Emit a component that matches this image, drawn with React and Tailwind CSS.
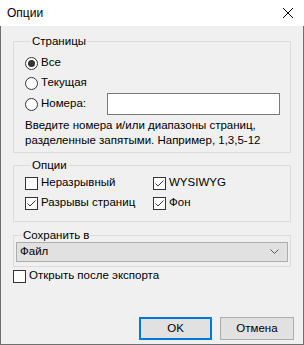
import { useState } from 'react'

function Radio({ checked, label, onClick }) {
  return (
    <label className="flex items-center gap-[3px] h-[20px] cursor-default" onClick={onClick}>
      <span className="w-[13px] h-[13px] rounded-full border border-[#333333] bg-white flex items-center justify-center">
        {checked && <span className="w-[7px] h-[7px] rounded-full bg-[#333333]" />}
      </span>
      <span>{label}</span>
    </label>
  )
}

function Check({ checked, label, onClick }) {
  return (
    <label className="flex items-center gap-[3px] h-[20px] cursor-default" onClick={onClick}>
      <span className="w-[13px] h-[13px] border border-[#333333] bg-white flex items-center justify-center">
        {checked && (
          <svg width="11" height="11" viewBox="0 0 11 11">
            <path d="M1.5 5.5 L4 8 L9.5 2.5" fill="none" stroke="#333333" strokeWidth="1" />
          </svg>
        )}
      </span>
      <span>{label}</span>
    </label>
  )
}

export default function App() {
  const [pages, setPages] = useState('all')
  const [opts, setOpts] = useState({ seamless: false, wysiwyg: true, breaks: true, bg: true })
  const [openAfter, setOpenAfter] = useState(false)
  const toggle = (k) => setOpts({ ...opts, [k]: !opts[k] })

  return (
    <div
      className="w-[304px] h-[345px] flex flex-col text-[11.5px] text-black bg-[#f0f0f0] border-x border-b border-[#6f6f6f]"
      style={{ fontFamily: '"Liberation Sans", Arial, sans-serif' }}
    >
      {/* заголовок */}
      <div className="h-[26px] bg-white flex items-center justify-between pl-[7px] pr-[10px] -mx-px">
        <span className="text-[12px]">Опции</span>
        <svg width="12" height="12" viewBox="0 0 12 12">
          <path d="M1 1 L11 11 M11 1 L1 11" stroke="#000" strokeWidth="1" />
        </svg>
      </div>

      <div className="flex flex-col px-[12px] pt-[8px]">
        <fieldset className="border border-[#dcdcdc] h-[119px] pl-[11px] pr-[10px]">
          <legend className="ml-[6px] px-[1px] leading-[14px]">Страницы</legend>
          <div className="mt-[5px]">
            <Radio checked={pages === 'all'} label="Все" onClick={() => setPages('all')} />
            <Radio checked={pages === 'cur'} label="Текущая" onClick={() => setPages('cur')} />
            <div className="flex items-center justify-between">
              <Radio checked={pages === 'num'} label="Номера:" onClick={() => setPages('num')} />
              <input className="w-[173px] h-[22px] border border-[#7a7a7a] bg-white outline-none px-1" />
            </div>
            <p className="mt-[3px] leading-[15px]">
              Введите номера и/или диапазоны страниц,
              <br />
              разделенные запятыми. Например, 1,3,5-12
            </p>
          </div>
        </fieldset>

        <fieldset className="border border-[#dcdcdc] h-[64px] mt-[5px] pl-[11px]">
          <legend className="ml-[6px] px-[1px] leading-[14px]">Опции</legend>
          <div className="grid grid-cols-[128px_1fr] mt-[1px]">
            <Check checked={opts.seamless} label="Неразрывный" onClick={() => toggle('seamless')} />
            <Check checked={opts.wysiwyg} label="WYSIWYG" onClick={() => toggle('wysiwyg')} />
            <Check checked={opts.breaks} label="Разрывы страниц" onClick={() => toggle('breaks')} />
            <Check checked={opts.bg} label="Фон" onClick={() => toggle('bg')} />
          </div>
        </fieldset>

        <fieldset className="border border-[#dcdcdc] h-[39px] mt-[6px] px-[2px]">
          <legend className="ml-[6px] px-[1px] leading-[14px]">Сохранить в</legend>
          <div className="h-[20px] border border-[#adadad] bg-[#e1e1e1] flex items-center justify-between pl-[3px] pr-[8px]">
            <span>Файл</span>
            <svg width="9" height="6" viewBox="0 0 9 6">
              <path d="M0.5 0.5 L4.5 4.5 L8.5 0.5" fill="none" stroke="#555" strokeWidth="1" />
            </svg>
          </div>
        </fieldset>

        <div className="-mt-[1px]">
          <Check checked={openAfter} label="Открыть после экспорта" onClick={() => setOpenAfter(!openAfter)} />
        </div>
      </div>

      <div className="mt-auto mb-[4px] flex justify-end gap-[8px] pr-[9px]">
        <button className="w-[73px] h-[23px] border-2 border-[#0078d7] bg-[#e1e1e1]">OK</button>
        <button className="w-[74px] h-[23px] border border-[#adadad] bg-[#e1e1e1]">Отмена</button>
      </div>
    </div>
  )
}
